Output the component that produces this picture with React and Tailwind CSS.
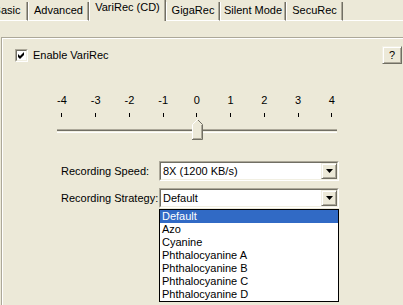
import React from 'react';

const TABS = [
    { id: 'basic', label: 'Basic', width: 'w-[42px]' },
    { id: 'advanced', label: 'Advanced', width: 'w-[61px]' },
    { id: 'varirec', label: 'VariRec (CD)', width: 'w-[77px]', selected: true },
    { id: 'gigarec', label: 'GigaRec', width: 'w-[54px]' },
    { id: 'silent', label: 'Silent Mode', width: 'w-[66px]' },
    { id: 'securec', label: 'SecuRec', width: 'w-[57px]' },
];

const STEPS = ['-4', '-3', '-2', '-1', '0', '1', '2', '3', '4'];

const STRATEGIES = [
    'Default',
    'Azo',
    'Cyanine',
    'Phthalocyanine A',
    'Phthalocyanine B',
    'Phthalocyanine C',
    'Phthalocyanine D',
];

const Tab = ({ tab }) => {
    if (tab.selected) {
        return (
            <div className={`${tab.width} h-[21px] shrink-0 flex justify-center pt-[1px] border-l border-l-white border-r border-r-[#716F64] shadow-[inset_-1px_0_0_#ACA899]`}>
                {tab.label}
            </div>
        );
    }
    return (
        <div className={`${tab.width} h-[19px] shrink-0 flex justify-center pt-[2px] border-l border-l-white border-r border-r-[#716F64] border-b border-b-white shadow-[inset_-1px_0_0_#ACA899]`}>
            {tab.label}
        </div>
    );
};

const DropButton = () => (
    <div className="w-[16px] h-[16px] flex items-center justify-center bg-[#ECE9D8] border border-t-[#F1EFE2] border-l-[#F1EFE2] border-r-[#716F64] border-b-[#716F64] shadow-[inset_1px_1px_0_#fff,inset_-1px_-1px_0_#ACA899]">
        <svg width="7" height="4" viewBox="0 0 7 4">
            <path d="M0 0 H7 L3.5 4 Z" fill="#000" />
        </svg>
    </div>
);

const ComboBox = ({ value }) => (
    <div className="w-[180px] h-[20px] border border-t-[#ACA899] border-l-[#ACA899] border-r-white border-b-white">
        <div className="h-full flex items-center bg-white border border-t-[#716F64] border-l-[#716F64] border-r-[#F1EFE2] border-b-[#F1EFE2]">
            <span className="flex-1 pl-[2px]">{value}</span>
            <DropButton />
        </div>
    </div>
);

const App = () => {
    return (
        <div className="w-[403px] h-[305px] overflow-hidden bg-[#ECE9D8] text-black text-[11px] leading-[13px] font-['Liberation_Sans',Arial,sans-serif]">
            {/* Tab strip */}
            <div className="flex items-end h-[21px] ml-[-14px]">
                {TABS.map((tab) => (
                    <Tab key={tab.id} tab={tab} />
                ))}
                <div className="flex-1 h-px bg-white" />
            </div>

            {/* Group box */}
            <div className="mt-[16px] ml-[1px] w-[402px] h-[300px] border-t border-l border-[#ACA899]">
                <div className="h-full border-t border-l border-white">
                    {/* Enable row */}
                    <div className="flex items-center justify-between pt-[7px] pl-[12px] pr-[1px]">
                        <label className="flex items-center gap-[5px]">
                            <div className="w-[13px] h-[13px] border border-t-[#ACA899] border-l-[#ACA899] border-r-white border-b-white">
                                <div className="w-full h-full flex items-center justify-center bg-white border border-t-[#716F64] border-l-[#716F64] border-r-[#F1EFE2] border-b-[#F1EFE2]">
                                    <svg width="7" height="7" viewBox="0 0 7 7">
                                        <path d="M0 2 L2 4 L6 0 L6 3 L2 7 L0 5 Z" fill="#000" />
                                    </svg>
                                </div>
                            </div>
                            <span>Enable VariRec</span>
                        </label>
                        <button className="w-[20px] h-[18px] flex items-center justify-center border border-t-[#F1EFE2] border-l-[#F1EFE2] border-r-[#716F64] border-b-[#716F64] shadow-[inset_1px_1px_0_#fff,inset_-1px_-1px_0_#ACA899]">
                            ?
                        </button>
                    </div>

                    {/* Slider labels */}
                    <div className="flex ml-[42px] mt-[30px]">
                        {STEPS.map((step) => (
                            <div key={step} className="w-[33.75px] text-center">
                                {step}
                            </div>
                        ))}
                    </div>

                    {/* Ticks */}
                    <div className="flex ml-[42px] mt-[6px] h-[4px]">
                        {STEPS.map((step) => (
                            <div key={step} className="w-[33.75px] flex justify-center">
                                <div className="w-px h-[4px] bg-black" />
                            </div>
                        ))}
                    </div>

                    {/* Track + thumb */}
                    <div className="relative ml-[54px] mt-[2px] w-[280px] h-[21px] pt-[10px]">
                        <div className="h-px bg-[#ACA899]" />
                        <div className="h-px bg-[#716F64]" />
                        <div className="h-px bg-[#F1EFE2]" />
                        <div className="h-px bg-white" />
                        <svg className="absolute left-[135px] top-0" width="11" height="21" viewBox="0 0 11 21">
                            <path d="M5.5 0 L11 5.5 L11 21 L0 21 L0 5.5 Z" fill="#ECE9D8" />
                            <polyline points="0.5,20.5 0.5,5.5 5.5,0.5" fill="none" stroke="#fff" />
                            <polyline points="6,1 10.5,5.5 10.5,20.5 0,20.5" fill="none" stroke="#716F64" />
                            <polyline points="9.5,6 9.5,19.5 1,19.5" fill="none" stroke="#ACA899" />
                        </svg>
                    </div>

                    {/* Recording speed */}
                    <div className="flex items-center mt-[21px] ml-[58px]">
                        <span className="w-[98px]">Recording Speed:</span>
                        <ComboBox value="8X (1200 KB/s)" />
                    </div>

                    {/* Recording strategy */}
                    <div className="flex items-center mt-[7px] ml-[58px]">
                        <span className="w-[98px]">Recording Strategy:</span>
                        <div className="relative">
                            <ComboBox value="Default" />
                            <ul className="absolute left-0 top-[21px] w-[180px] bg-white border border-black">
                                {STRATEGIES.map((item, i) => (
                                    <li
                                        key={item}
                                        className={i === 0 ? 'h-[13px] pl-[2px] bg-[#316AC5] text-white' : 'h-[13px] pl-[2px]'}
                                    >
                                        {item}
                                    </li>
                                ))}
                            </ul>
                        </div>
                    </div>
                </div>
            </div>
        </div>
    );
};

export default App;
